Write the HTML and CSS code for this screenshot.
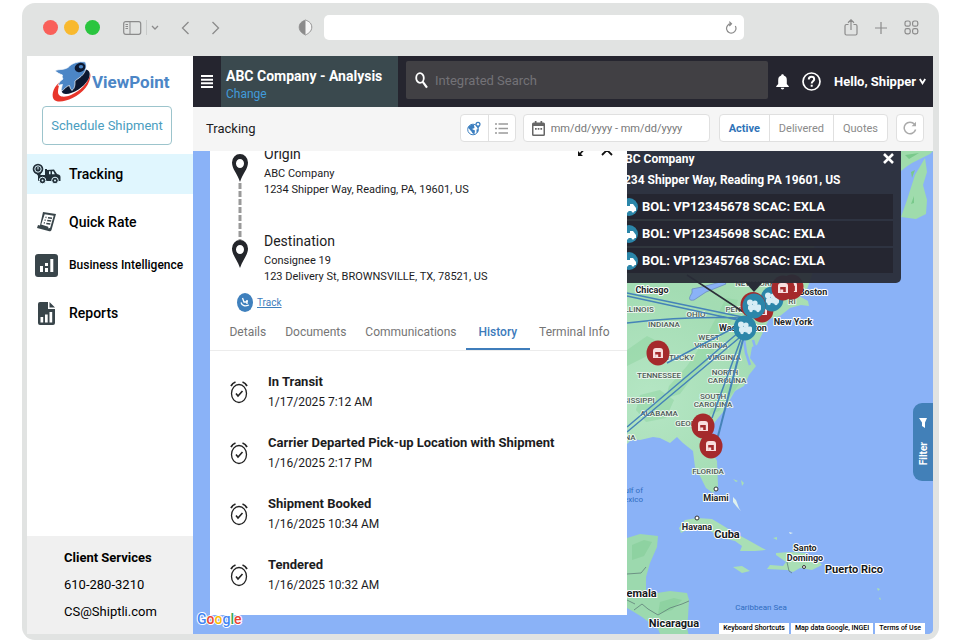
FILE: index.html
```html
<!DOCTYPE html>
<html lang="en">
<head>
<meta charset="utf-8">
<meta name="viewport" content="width=device-width, initial-scale=1">
<title>ViewPoint - Tracking</title>
<link rel="stylesheet" href="styles.css">
</head>
<body>
<div class="browser">
  <div class="chrome">
    <div class="lights"><span class="light light-close"></span><span class="light light-min"></span><span class="light light-max"></span></div>
    <div class="chrome-group tools">
      <button class="bare" aria-label="Show sidebar"><svg width="19" height="14" viewBox="0 0 19 14" fill="none" stroke="currentColor"><rect x=".7" y=".7" width="17" height="12.6" rx="2" stroke-width="1.2"/><path d="M7 1v12M2.500 3.500h2.500M2.500 5.500h2.500M2.500 7.500h2.500"/></svg></button>
      <span class="divider"></span>
      <button class="bare" aria-label="Sidebar options"><svg width="8" height="6" viewBox="0 0 8 6" fill="none" stroke="currentColor" stroke-width="1.300"><path d="M1 1l3 3 3-3"/></svg></button>
    </div>
    <div class="chrome-group history-nav">
      <button class="bare" aria-label="Back"><svg width="9" height="14" viewBox="0 0 9 14" fill="none" stroke="currentColor" stroke-width="1.300"><path d="M7.500 1L1.500 7l6 6"/></svg></button>
      <button class="bare" aria-label="Forward"><svg width="9" height="14" viewBox="0 0 9 14" fill="none" stroke="currentColor" stroke-width="1.300"><path d="M1.500 1l6 6-6 6"/></svg></button>
    </div>
    <svg class="shield" width="15" height="17" viewBox="0 0 15 17"><path d="M7.500 1C9.500 2 13.500 3 13.800 8c0 4.500-3.500 6.500-6.300 8C4.700 14.500 1.200 12.500 1.200 8 1.500 3 5.500 2 7.500 1z" fill="#f6f6f6" stroke="#8b8b8b" stroke-width=".9"/><path d="M7.500 1v15C4.700 14.500 1.200 12.500 1.200 8 1.500 3 5.500 2 7.500 1z" fill="#8b8b8b"/></svg>
    <div class="address">
      <input type="text" aria-label="Address">
      <button class="bare" aria-label="Reload"><svg width="12" height="13" viewBox="0 0 12 13" fill="none" stroke="currentColor" stroke-width="1.200"><path d="M10.300 5A4.700 4.700 0 1 1 6 2.700M4.300.6L6.500 2.700 4.300 5"/></svg></button>
    </div>
    <div class="chrome-group actions">
      <button class="bare" aria-label="Share"><svg width="14" height="17" viewBox="0 0 14 17" fill="none" stroke="currentColor" stroke-width="1.200"><path d="M4.500 5.500H2.500A1.500 1.500 0 0 0 1 7v7.500A1.500 1.500 0 0 0 2.500 16h9a1.500 1.500 0 0 0 1.500-1.500V7a1.500 1.500 0 0 0-1.500-1.500H9.500M7 11V1M4 3.700L7 .8l3 2.900"/></svg></button>
      <button class="bare" aria-label="New tab"><svg width="12" height="12" viewBox="0 0 12 12" stroke="currentColor" stroke-width="1.200"><path d="M6 0v12M0 6h12"/></svg></button>
      <button class="bare" aria-label="Tab overview"><svg width="15" height="15" viewBox="0 0 15 15" fill="none" stroke="currentColor" stroke-width="1.200"><rect x="1" y="1" width="5.200" height="5.200" rx="1.800"/><rect x="8.600" y="1" width="5.200" height="5.200" rx="1.800"/><rect x="1" y="8.600" width="5.200" height="5.200" rx="1.800"/><rect x="8.600" y="8.600" width="5.200" height="5.200" rx="1.800"/></svg></button>
    </div>
  </div>

  <div class="app">
    <aside class="sidebar">
      <a class="logo" href="#"><svg width="40" height="42" viewBox="0 0 40 42"><path d="M10 20C3 25 0 33 2.500 38c3 4 11 3 19-1C32 32 40 23 39.500 12 38 22 29 30 20 34c-7 3-13 2-13-3 0-4 1-7 3-11z" fill="#e8352a"/><path d="M13 22c-4 7-3 11 2 11 7 0 18-7 22-14 3-5 2-10-2-10.500z" fill="#0c1830"/><path d="M4 9.500c5-1.500 9-.5 13-3C21 2 28-.2 34.500 1c2 6-.5 12-6.500 16-2 1.500-3 2-4 3 0 4 0 7-3 9.500-1.500-1-2-3-2.500-5-3 .5-5 3.500-8 6 0-3 .2-5 1-7-1.500 0-3 .5-4.500 1 1-3 2.500-5 5-6.500-1-1.500-1-2.500-.5-4C9 13 6 12 4 9.500z" fill="#4c86c6" stroke="#fff" stroke-width=".7"/><ellipse cx="29" cy="6.500" rx="5.500" ry="4.500" transform="rotate(-25 29 6.500)" fill="#0c1830"/><ellipse cx="30" cy="5.800" rx="2.200" ry="1.800" fill="#4c86c6"/></svg><span>ViewPoint</span></a>
      <button class="schedule">Schedule Shipment</button>
      <nav class="nav">
        <div class="nav-group">
          <a class="nav-item active" href="#"><svg width="29" height="22" viewBox="0 0 29 22"><path d="M6 12h7V6h2v1l7-.500 3 4.500c2 .5 3.500 1 3.500 3v4H6z" fill="#22303a"/><path d="M17 8.200h1.500v3H17zM20 8.200h1.300l1.500 3H20z" fill="#e0f6fe"/><circle cx="10.500" cy="17.500" r="3.300" fill="#22303a" stroke="#e0f6fe"/><circle cx="23" cy="17.500" r="3.300" fill="#22303a" stroke="#e0f6fe"/><circle cx="10.500" cy="17.500" r="1" fill="#e0f6fe"/><circle cx="23" cy="17.500" r="1" fill="#e0f6fe"/><path d="M3 9l4 5 3-5" fill="#22303a"/><circle cx="6" cy="6" r="5.300" fill="#22303a"/><circle cx="6" cy="6" r="3.200" fill="none" stroke="#e0f6fe" stroke-width="1"/><path d="M6 4v2.500" stroke="#e0f6fe"/></svg><span>Tracking</span></a>
        </div>
        <div class="nav-group">
          <a class="nav-item" href="#"><svg width="21" height="22" viewBox="0 0 21 22"><path d="M7 1l13 2-4.500 16c-.5 1.500-2 1.500-3 1L1 17l1-3 2 .5z" fill="#39454a"/><path d="M8.700 3.200l9 1.500-3.500 12-1.700.8-.3-1.700-7-2.200z" fill="#fff"/><path d="M9.500 6.300l1 .2M12 6.700l4 .6M8.600 9l1 .2M11.200 9.500l4 .6M7.800 11.800l1 .2M10.300 12.400l4 .7" stroke="#39454a" stroke-width="1.500"/></svg><span>Quick Rate</span></a>
          <a class="nav-item small" href="#"><svg width="23" height="23" viewBox="0 0 23 23"><rect width="23" height="23" rx="3" fill="#39454a"/><path d="M5 12h3v6H5zM10 9h3v3h-3zM10 14h3v4h-3zM15.300 5h3v13h-3z" fill="#fff"/></svg><span>Business Intelligence</span></a>
        </div>
        <div class="nav-group">
          <a class="nav-item" href="#"><svg width="17" height="23" viewBox="0 0 17 23"><path d="M2 0h8v7h7v14a2 2 0 0 1-2 2H2a2 2 0 0 1-2-2V2a2 2 0 0 1 2-2zM11.500 0L17 5.500h-5.500z" fill="#39454a"/><path d="M2.500 15h2.700v5.500H2.500zM7 12.500h2.700v8H7zM11.500 10h2.700v10.500h-2.700z" fill="#fff"/></svg><span>Reports</span></a>
        </div>
      </nav>
      <footer class="client"><strong>Client Services</strong><a href="#">610-280-3210</a><a href="#">CS@Shiptli.com</a></footer>
    </aside>

    <main class="main">
      <header class="topbar">
        <button class="bare burger" aria-label="Menu"><svg width="12" height="13" viewBox="0 0 12 13" stroke="#fff" stroke-width="2"><path d="M0 1h12M0 4.700h12M0 8.300h12M0 12h12"/></svg></button>
        <div class="company"><strong>ABC Company - Analysis</strong><a href="#">Change</a></div>
        <label class="search"><svg width="13" height="17" viewBox="0 0 13 17" fill="none" stroke="#fff" stroke-width="1.800"><ellipse cx="5" cy="6" rx="3.800" ry="4.800"/><path d="M7.600 9.600l4.400 6" stroke-width="2.200"/></svg><input type="search" placeholder="Integrated Search" aria-label="Integrated Search"></label>
        <div class="account">
          <button class="bare" aria-label="Notifications"><svg width="13" height="16" viewBox="0 0 13 16" fill="#fff"><path d="M6.500.3c1 0 1.300.6 1.300 1.300 2 .6 3 2.200 3 4.400v4l2 2.300v.7H.2v-.7L2.200 10V6c0-2.200 1-3.800 3-4.400 0-.7.3-1.300 1.300-1.300zM4.800 13.800h3.400c0 1-.7 1.700-1.700 1.700s-1.700-.7-1.700-1.700z"/></svg></button>
          <button class="bare" aria-label="Help"><svg width="19" height="19" viewBox="0 0 19 19" fill="none" stroke="#fff"><circle cx="9.500" cy="9.500" r="8.500" stroke-width="1.700"/><path d="M6.800 7.400c0-1.600 1.200-2.600 2.700-2.600s2.700 1 2.700 2.400c0 2-2.500 2.100-2.500 4.200M9.700 12.700v2" stroke-width="2"/></svg></button>
          <button class="bare hello">Hello, Shipper <svg width="7" height="7" viewBox="0 0 7 7" fill="none" stroke="#fff" stroke-width="1.800"><path d="M.8 1l2.700 4.300L6.200 1"/></svg></button>
        </div>
      </header>

      <div class="toolbar">
        <h1>Tracking</h1>
        <div class="segmented icons">
          <button aria-label="Map view"><svg width="14" height="15" viewBox="0 0 14 15"><circle cx="6" cy="8.500" r="5.300" fill="#fff" stroke="#3c7fc0" stroke-width="1"/><path d="M1 6.500C3 4 5 3.500 7 4l.5 3L5 8l3 1.500-.5 3.500C5 13 5 10.500 3.500 9.500zM9.500 8.500l2-.5c0 2-.7 3.300-2 4z" fill="#3c7fc0"/><path d="M11 .7a2.600 2.600 0 0 1 2.600 2.600c0 1.700-1.600 2.600-2.600 4.400C10 5.900 8.400 5 8.400 3.300A2.600 2.600 0 0 1 11 .7z" fill="#3c7fc0"/><circle cx="11" cy="3.200" r="1.200" fill="#fff"/></svg></button>
          <button aria-label="List view"><svg width="13" height="11" viewBox="0 0 13 11" stroke="#9b9b9b" stroke-width="1.300"><path d="M0 1h2M3.500 1H13M0 5.500h2M3.500 5.500H13M0 10h2M3.500 10H13"/></svg></button>
        </div>
        <label class="date"><svg width="13" height="15" viewBox="0 0 13 15"><path d="M1.500 1.500h1.300V0h1.700v1.500h4V0h1.700v1.500h1.300A1.500 1.500 0 0 1 13 3v10.500a1.500 1.500 0 0 1-1.500 1.500h-10A1.500 1.500 0 0 1 0 13.500V3a1.500 1.500 0 0 1 1.500-1.500z" fill="#666"/><path d="M1.500 5h10v8.500h-10z" fill="#fff"/><path d="M3 7h1.700v1.700H3zM5.700 7h1.700v1.700H5.700zM8.400 7h1.700v1.700H8.400z" fill="#666"/></svg><input type="text" placeholder="mm/dd/yyyy - mm/dd/yyyy" aria-label="Date range"></label>
        <div class="segmented filters"><button class="on">Active</button><button>Delivered</button><button>Quotes</button></div>
        <button class="refresh" aria-label="Refresh"><svg width="14" height="14" viewBox="0 0 14 14" fill="none" stroke="#aaa" stroke-width="1.500"><path d="M12.600 8.500A5.800 5.800 0 1 1 11.500 3.300"/><path d="M13 .8v4.400H8.600z" fill="#aaa" stroke="none"/></svg></button>
      </div>

      <section class="map-area">
        <svg class="map" viewBox="193 151 740 483" preserveAspectRatio="xMaxYMin slice" role="img" aria-label="Shipment map">
          <defs>
            <radialGradient id="land" gradientUnits="userSpaceOnUse" cx="650" cy="400" r="190"><stop offset="0" stop-color="#b5e6c4"/><stop offset=".6" stop-color="#a3dcb3"/><stop offset="1" stop-color="#a9dfb2"/></radialGradient>
            <g id="dock"><ellipse rx="11.500" ry="12.500" fill="#a52a2c"/><path d="M-5 5v-7q0-3 3-3h4q3 0 3 3v7z" fill="#f8dede"/><path d="M-2.800 4v-5h5.600v5z" fill="#a52a2c"/><path d="M-2.800 4v-2.500h3V4z" fill="#f8dede"/></g>
            <g id="load"><ellipse rx="11.500" ry="12.500" fill="#2b86a9"/><g fill="#d7edf5"><circle cx="-4" cy="-3.500" r="3"/><circle cx="1" cy="-3" r="2.600"/><rect x="-6" y="-1" width="7" height="5" rx="1.500"/><rect x="0" y="-1.500" width="7" height="6" rx="1.500"/><circle cx="-3" cy="4.500" r="1.700"/><circle cx="4" cy="4.500" r="1.700"/></g></g>
          </defs>
          <rect x="-1000" y="151" width="2000" height="1000" fill="#8ab2f7"/>
          <path d="M627 200H818L812 275 806 292 799 296 808 301 809 306 801 305 790 308 780 316 769 319 764 330 757 345 752 347 750 358 756 366 749 375 744 386 735 391 723 412 714 423 708 434 710 448 717 461 718 486 713 493 706 488 701 478 695 467 693 451 683 443 677 437 670 443 660 438 653 437 640 440 632 439 627 444z" fill="url(#land)"/>
          <path d="M738 300l-6 20-12 18-10 20-18 20-12 16-14 4 3-12 18-20 15-22 14-26 10-20zM640 395l20-5 14 10-8 18-20 4-10-12zM715 395l14-12 14-4-10 14-14 18-10 4zM627 350l20-14 12 6-8 12-24 12z" fill="#8ed3a0" opacity=".5"/>
          <path d="M750 365l-4-12-2-14M756 350l-3-10" stroke="#8ab2f7" stroke-width="2.500" fill="none"/>
          <path d="M692 293c-4 6-3 8 2 7l12-8 20-8-2-3-22 6-10 2z" fill="#8ab2f7" stroke="#6b8bc0" stroke-width=".8"/>
          <path d="M901 151h32l-3 3-18 9-6 4-5 4zM901 217l6-17 8-25 10-17 2 14-4 13 4 15-1 14-10 5z" fill="#9fdcac"/>
          <path d="M911 172l4-2-3 8zM914 196l-3 8 3-1zM905 155l14-2-10 6z" fill="#79c98b"/>
          <path d="M627 538l13-4 18 2-1 11-7 16-4 14v14l11 2 13-2 17 2 2 7-1 17-1 11 2 8h-28l-3-7-16-12-8-5-7-4z" fill="#9cd9ae"/>
          <path d="M660 602l14-4 8 2-10 10-14 4zM632 545l12-5 8 2-8 14-12 4z" fill="#85cd98" opacity=".6"/>
          <path d="M627 574l14-1 5-6M634 610l8-6 6 5 10 6 12-7 12-4 7-3M627 600l8 4" fill="none" stroke="#5f7f78" stroke-width=".8"/>
          <path d="M679 528l6-8 12-2 15 1 10 6 13 8 13 7 18 10-11 1h-15l2-5-7-5-13-3-10-6-12-7-10 3-9 5zM776 553l14-1 15 1 13 7 4 5-10 5-12-2-7 4-6-2-20-1 3-4 13 1 3-4-10-7zM733 567l9-1 8 5-8 2zM773 538l4-1v3zM733 479l5 2-2 1zM741 480l3 3-2 3zM877 588l3 1-2 2zM880 597l1 3-2-1z" fill="#a9dfb5"/>
          <path d="M733 497l3 3 3 8 2 3-4-4-4-5zM767 521l2 1zM789 532l4 1-3 1z" fill="#dff1ee"/>
          <path d="M787 562l2 9 3 2" fill="none" stroke="#5f7f78" stroke-width=".8"/>
          <g class="state-labels">
            <text x="638" y="312">ILLINOIS</text><text x="664" y="327">INDIANA</text><text x="696" y="317">OHIO</text><text x="709" y="340">WEST</text><text x="711" y="348">VIRGINIA</text><text x="674" y="360">KENTUCKY</text><text x="724" y="360">VIRGINIA</text><text x="659" y="378">TENNESSEE</text><text x="725" y="375">NORTH</text><text x="727" y="383">CAROLINA</text><text x="713" y="399">SOUTH</text><text x="713" y="407">CAROLINA</text><text x="632" y="403">MISSISSIPPI</text><text x="659" y="416">ALABAMA</text><text x="692" y="426">GEORGIA</text><text x="630" y="440">NA</text><text x="708" y="474">FLORIDA</text><text x="755" y="286">NEW YORK</text><text x="736" y="312">PENN</text><text x="792" y="304">RI</text>
          </g>
          <g class="city-labels">
            <text x="652" y="293">Chicago</text><text x="743" y="331">Washington</text><text x="793" y="325">New York</text><text x="813" y="295">Boston</text><text x="716" y="501">Miami</text><text x="697" y="530">Havana</text><text x="805" y="551">Santo</text><text x="805" y="561">Domingo</text>
          </g>
          <g class="country-labels">
            <text x="727" y="538">Cuba</text><text x="854" y="573">Puerto Rico</text><text x="630" y="597">Guatemala</text><text x="674" y="627">Nicaragua</text>
          </g>
          <g class="sea-labels"><text x="631" y="493">Gulf of</text><text x="630" y="502">Mexico</text><text x="761" y="610">Caribbean Sea</text></g>
          <g fill="#fff" stroke="#333"><circle cx="716" cy="489" r="2"/><circle cx="697" cy="518" r="2"/><circle cx="804" cy="567" r="1.500"/></g>
          <g fill="none" stroke="#4583b8" stroke-width="1.500"><path d="M627 293l120 25M627 296l120 26M627 323q60-7 118-5M667 363l78-41M627 427l118-100M627 432l118-99M712 418l33-90"/><path d="M717 440l29-112" stroke-width="2"/></g>
          <path d="M687 275l58 38" stroke="#2b2f38" stroke-width="1.500"/>
          <use href="#dock" x="792" y="287"/><use href="#dock" x="762" y="310"/><use href="#load" x="772" y="299"/><use href="#dock" x="783" y="288"/>
          <ellipse cx="753" cy="305" rx="12.500" ry="13" fill="#a52a2c"/><use href="#load" x="754" y="306"/><use href="#load" x="745" y="328"/>
          <use href="#dock" x="658" y="353"/><use href="#dock" x="703" y="426"/><use href="#dock" x="711" y="446"/>
          <path d="M745 282h18l-9 10z" fill="#292c37"/>
        </svg>

        <div class="popup">
          <button class="bare popup-close" aria-label="Close"><svg width="11" height="11" viewBox="0 0 11 11" stroke="#fff" stroke-width="2.600"><path d="M1 1l9 9M10 1l-9 9"/></svg></button>
          <strong>ABC Company</strong>
          <strong>1234 Shipper Way, Reading PA 19601, US</strong>
          <ul>
            <li><svg class="truck" width="18" height="18" viewBox="0 0 18 18"><circle cx="9" cy="9" r="9" fill="#2b86a9"/><path d="M4 8h6V6h3l3 4v3H4z" fill="#fff"/><circle cx="7" cy="13" r="1.500" fill="#fff"/><circle cx="13" cy="13" r="1.500" fill="#fff"/></svg>BOL: VP12345678 SCAC: EXLA</li>
            <li><svg class="truck" width="18" height="18" viewBox="0 0 18 18"><circle cx="9" cy="9" r="9" fill="#2b86a9"/><path d="M4 8h6V6h3l3 4v3H4z" fill="#fff"/><circle cx="7" cy="13" r="1.500" fill="#fff"/><circle cx="13" cy="13" r="1.500" fill="#fff"/></svg>BOL: VP12345698 SCAC: EXLA</li>
            <li><svg class="truck" width="18" height="18" viewBox="0 0 18 18"><circle cx="9" cy="9" r="9" fill="#2b86a9"/><path d="M4 8h6V6h3l3 4v3H4z" fill="#fff"/><circle cx="7" cy="13" r="1.500" fill="#fff"/><circle cx="13" cy="13" r="1.500" fill="#fff"/></svg>BOL: VP12345768 SCAC: EXLA</li>
          </ul>
        </div>

        <article class="panel">
          <div class="route">
            <svg class="route-pins" width="18" height="114" viewBox="0 0 18 114"><defs><path id="pin" fill-rule="evenodd" d="M9 0a8 8.500 0 0 1 8 8.500C17 15 12 19 9 28 6 19 1 15 1 8.500A8 8.500 0 0 1 9 0zM9 5a4 4.500 0 1 0 0 9 4 4.500 0 0 0 0-9z" fill="#24262b"/></defs><use href="#pin"/><path d="M9 29v57" stroke="#999" stroke-width="3" stroke-dasharray="6 2"/><use href="#pin" y="86"/></svg>
            <div class="stops">
              <div class="stop"><h2>Origin</h2><p>ABC Company</p><p>1234 Shipper Way, Reading, PA, 19601, US</p></div>
              <div class="stop"><h2>Destination</h2><p>Consignee 19</p><p>123 Delivery St, BROWNSVILLE, TX, 78521, US</p></div>
            </div>
            <div class="panel-actions">
              <button class="bare" aria-label="Expand"><svg width="12" height="12" viewBox="0 0 12 12"><path d="M7 1h4v4zM1 7v5h5z" fill="#111"/><path d="M2 11L11 1" stroke="#111" stroke-width="1.600"/></svg></button>
              <button class="bare" aria-label="Close panel"><svg width="12" height="12" viewBox="0 0 12 12" stroke="#111" stroke-width="1.800"><path d="M1 1l10 10M11 1L1 11"/></svg></button>
            </div>
          </div>
          <a class="track" href="#"><svg width="16" height="19" viewBox="0 0 16 19"><ellipse cx="8" cy="9.500" rx="8" ry="9.500" fill="#3f80bd"/><path d="M5.500 5l1.500 4h3v2M4 9.500c1 3.500 4 4 8 2.500M9 8h2" fill="none" stroke="#fff" stroke-width="1.300"/></svg><span>Track</span></a>
          <div class="tabs" role="tablist">
            <button role="tab">Details</button><button role="tab">Documents</button><button role="tab">Communications</button><button role="tab" class="on" aria-selected="true">History</button><button role="tab">Terminal Info</button>
          </div>
          <svg width="0" height="0" class="sprite"><symbol id="alarm" viewBox="0 0 18 24"><ellipse cx="9" cy="13.500" rx="7.500" ry="9" fill="none" stroke="#222" stroke-width="1.300"/><path d="M6 13.500l2 2.500 4.500-5" fill="none" stroke="#222" stroke-width="1.600"/><path d="M1 6q1.500-3 4.500-4M17 6q-1.500-3-4.500-4" fill="none" stroke="#222" stroke-width="1.800"/></symbol></svg>
          <ol class="events">
            <li><svg width="18" height="24"><use href="#alarm"/></svg><div><h3>In Transit</h3><time>1/17/2025 7:12 AM</time></div></li>
            <li><svg width="18" height="24"><use href="#alarm"/></svg><div><h3>Carrier Departed Pick-up Location with Shipment</h3><time>1/16/2025 2:17 PM</time></div></li>
            <li><svg width="18" height="24"><use href="#alarm"/></svg><div><h3>Shipment Booked</h3><time>1/16/2025 10:34 AM</time></div></li>
            <li><svg width="18" height="24"><use href="#alarm"/></svg><div><h3>Tendered</h3><time>1/16/2025 10:32 AM</time></div></li>
          </ol>
        </article>

        <button class="filter-tab"><svg width="8" height="10" viewBox="0 0 8 10" fill="#fff"><path d="M0 0h8L6 4.500V10L3 8V4.500z"/></svg><span>Filter</span></button>
        <a class="google" href="#" aria-label="Google"><span class="g-blue">G</span><span class="g-red">o</span><span class="g-yellow">o</span><span class="g-blue">g</span><span class="g-green">l</span><span class="g-red">e</span></a>
        <div class="credits"><a href="#">Keyboard Shortcuts</a><a href="#">Map data Google, INGEI</a><a href="#">Terms of Use</a></div>
      </section>
    </main>
  </div>
</div>
</body>
</html>
```
FILE: styles.css
```css
* { box-sizing: border-box; margin: 0; padding: 0; }

body {
  min-height: 100vh;
  display: flex;
  padding: 3px 21px 0 22px;
  background: #fff;
  color: #1c1c1e;
  font-family: Roboto, "Liberation Sans", sans-serif;
  font-size: 12px;
}

svg { display: block; flex: none; }
a { color: inherit; text-decoration: none; }
ul, ol { list-style: none; }
button, input { font: inherit; color: inherit; border: 0; background: none; }
button { cursor: pointer; white-space: nowrap; }
input { min-width: 0; outline: 0; }
.bare { display: flex; align-items: center; }

.browser {
  flex: 1;
  min-width: 0;
  display: flex;
  flex-direction: column;
  padding: 0 6px 6px 5px;
  border-radius: 13px;
  background: #e1e3e2;
}

/* Browser chrome */
.chrome {
  height: 53px;
  display: flex;
  align-items: center;
  padding: 0 14px 4px 16px;
  color: #8b8b8b;
}
.chrome-group { display: flex; align-items: center; }
.lights { display: flex; gap: 6px; }
.light { width: 15px; height: 15px; border-radius: 50%; }
.light-close { background: #f9605a; }
.light-min { background: #f8b92e; }
.light-max { background: #2ac53f; }
.tools { margin-left: 23px; gap: 4px; }
.divider { width: 1px; height: 15px; background: #c9cbca; }
.history-nav { margin-left: 22px; gap: 21px; }
.shield { margin-left: 78px; }
.address {
  flex: 1;
  min-width: 0;
  height: 25px;
  margin-left: 11px;
  padding-right: 7px;
  display: flex;
  align-items: center;
  border-radius: 5px;
  background: #fff;
}
.address input { flex: 1; padding-left: 8px; }
.actions { margin-left: 100px; gap: 17px; }

.app { flex: 1; display: flex; min-height: 0; }

/* Sidebar */
.sidebar {
  width: 166px;
  flex: none;
  display: flex;
  flex-direction: column;
  background: #fff;
  color: #000;
}
.logo {
  display: flex;
  align-items: center;
  gap: 1px;
  padding: 5px 0 3px 24px;
  color: #4c86c6;
  font-size: 17px;
  line-height: 20px;
  font-weight: 700;
}
.schedule {
  height: 39px;
  margin: 0 21px 0 15px;
  border: 1px solid #9cc4cc;
  border-radius: 4px;
  color: #4a9dc0;
  font-size: 13px;
}
.nav { display: flex; flex-direction: column; gap: 8px; margin-top: 9px; }
.nav-group { display: flex; flex-direction: column; gap: 3px; }
.nav-item {
  height: 40px;
  display: grid;
  grid-template-columns: 37px 1fr;
  gap: 4px;
  align-items: center;
  padding-left: 1px;
  font-size: 14px;
  font-weight: 500;
  white-space: nowrap;
}
.nav-item svg { justify-self: center; }
.nav-item.small { font-size: 12px; }
.nav-item.active { background: #e0f6fe; }
.client {
  margin-top: auto;
  height: 98px;
  display: flex;
  flex-direction: column;
  padding: 8px 0 0 37px;
  background: #f0f0f0;
  font-size: 13px;
  line-height: 27px;
}
.client strong { font-weight: 700; }

.main { flex: 1; min-width: 0; display: flex; flex-direction: column; }

/* Top bar */
.topbar { height: 51px; display: flex; background: #25252f; color: #fff; }
.burger { width: 28px; justify-content: center; }
.company {
  width: 177px;
  padding: 11px 5px 0;
  background: #3a494e;
  white-space: nowrap;
}
.company strong { display: block; font-size: 14px; line-height: 18px; font-weight: 700; }
.company a { display: block; font-size: 12px; line-height: 18px; color: #419bdb; }
.search {
  flex: 1;
  min-width: 0;
  height: 38px;
  margin: 5px 0 0 8px;
  padding: 0 9px;
  display: flex;
  align-items: center;
  gap: 7px;
  border-radius: 2px;
  background: #414044;
}
.search input { flex: 1; font-size: 13px; }
.search input::placeholder { color: #737277; }
.account { display: flex; align-items: center; gap: 13px; padding: 0 7px 0 8px; }
.hello { gap: 3px; font-size: 13px; font-weight: 700; }

/* Toolbar */
.toolbar {
  height: 44px;
  display: flex;
  align-items: center;
  padding: 0 9px 2px 13px;
  background: #f5f5f5;
}
.toolbar h1 { flex: 1; font-size: 13px; font-weight: 400; }
.segmented, .date, .refresh {
  height: 28px;
  display: flex;
  border: 1px solid #e0e0e0;
  border-radius: 4px;
  background: #fff;
}
.segmented button { display: flex; align-items: center; justify-content: center; color: #8a8a8a; }
.segmented button + button { border-left: 1px solid #e0e0e0; }
.segmented .on { color: #2f73b8; font-weight: 700; }
.icons button { width: 27px; }
.date { width: 187px; align-items: center; gap: 6px; margin: 0 9px 0 7px; padding: 0 8px; }
.date input { flex: 1; font-size: 11px; }
.date input::placeholder { color: #777; }
.filters { font-size: 11px; }
.filters button { padding: 0 9px; }
.refresh { width: 28px; align-items: center; justify-content: center; margin-left: 8px; }

/* Map */
.map-area {
  flex: 1;
  position: relative;
  display: flex;
  padding: 0 0 19px 17px;
  overflow: hidden;
  border-radius: 0 0 5px 0;
  background: #8ab2f7;
}
.map { position: absolute; inset: 0; width: 100%; height: 100%; }
.map text { text-anchor: middle; paint-order: stroke; stroke: #fff; stroke-width: 2px; stroke-linejoin: round; }
.map .state-labels text { stroke: #e6f5ea; }
.state-labels { font-size: 8px; font-weight: 500; fill: #4f5a57; }
.city-labels { font-size: 9px; font-weight: 700; fill: #202528; }
.country-labels { font-size: 11px; font-weight: 700; fill: #15191b; }
.sea-labels { font-size: 8px; fill: #2f6cc0; }
.map .sea-labels text { stroke: none; }

.popup {
  position: absolute;
  top: -12px;
  right: 32px;
  width: 292px;
  padding: 10px 8px;
  border-radius: 0 0 5px 5px;
  background: rgba(41, 44, 55, .95);
  color: #fff;
}
.popup strong { display: block; line-height: 21px; font-size: 12px; font-weight: 700; }
.popup ul { display: flex; flex-direction: column; gap: 2px; margin-top: 3px; }
.popup li {
  height: 25px;
  display: flex;
  align-items: center;
  gap: 4px;
  padding-left: 3px;
  background: #252631;
  font-size: 13px;
  font-weight: 700;
}
.popup-close { position: absolute; top: 14px; right: 7px; }

/* Shipment panel: content stays scrolled to its end */
.panel {
  position: relative;
  flex: 0 1 417px;
  min-width: 0;
  height: 464px;
  display: flex;
  flex-direction: column;
  justify-content: flex-end;
  overflow: hidden;
  background: #fff;
}
.route { display: flex; align-items: flex-start; padding: 0 14px 8px 21px; }
.route-pins { margin-top: 10px; }
.stops { flex: 1; display: flex; flex-direction: column; gap: 33px; padding-left: 15px; }
.stop h2 { margin-bottom: 2px; font-size: 14px; line-height: 20px; font-weight: 400; }
.stop p { font-size: 11px; line-height: 16px; }
.panel-actions { display: flex; gap: 12px; }
.track {
  align-self: flex-start;
  display: flex;
  align-items: center;
  gap: 4px;
  margin: 0 0 0 27px;
  color: #3f80bd;
  font-size: 10px;
}
.track span { text-decoration: underline; }
.tabs { display: flex; padding: 0 8px 0 10px; border-bottom: 1px solid #ececec; }
.tabs button { flex: 1 1 auto; height: 38px; padding: 4px 7px 0; border-bottom: 2px solid transparent; color: #757575; }
.tabs button.on { padding: 4px 10px 0; border-color: #3f7dbb; color: #3c7abb; font-weight: 500; }
.sprite { position: absolute; }
.events { padding: 10px 20px; }
.events li { height: 61px; display: flex; align-items: center; gap: 20px; }
.events h3 { font-size: 13px; line-height: 20px; font-weight: 700; }
.events time { display: block; font-size: 12px; line-height: 20px; font-weight: 400; }

.filter-tab {
  position: absolute;
  top: 252px;
  right: 0;
  width: 20px;
  height: 78px;
  display: flex;
  flex-direction: column;
  align-items: center;
  justify-content: center;
  gap: 14px;
  border-radius: 9px 0 0 9px;
  background: #4280b8;
  color: #fff;
  font-size: 10px;
  font-weight: 700;
}
.filter-tab span { writing-mode: vertical-rl; rotate: 180deg; }

.google {
  position: absolute;
  left: 4px;
  bottom: 6px;
  font-size: 14px;
  line-height: 17px;
  font-weight: 500;
  -webkit-text-stroke: 2px #fff;
  paint-order: stroke fill;
}
.g-blue { color: #4285f4; }
.g-red { color: #ea4335; }
.g-yellow { color: #fbbc05; }
.g-green { color: #34a853; }

.credits { position: absolute; right: 8px; bottom: 0; display: flex; gap: 2px; color: #000; font-size: 7px; line-height: 11px; font-weight: 500; }
.credits a { padding: 0 4px; background: #fff; }
```
